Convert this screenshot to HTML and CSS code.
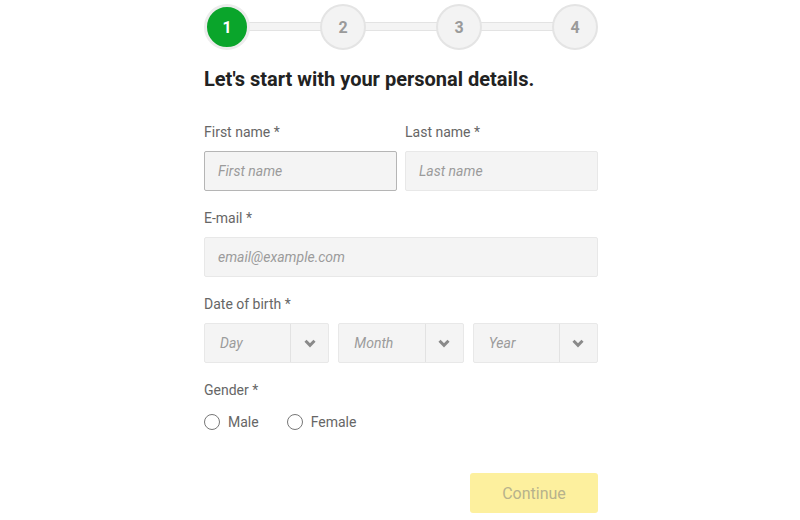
FILE: index.html
```html
<!DOCTYPE html>
<html lang="en">
<head>
  <meta charset="UTF-8">
  <title>Sign up - personal details</title>
  <link rel="stylesheet" href="styles.css">
</head>
<body>

<div class="wizard">
  <ol class="steps">
    <li class="step active">1</li>
    <li class="step">2</li>
    <li class="step">3</li>
    <li class="step">4</li>
  </ol>

  <h1>Let's start with your personal details.</h1>

  <form id="detailsForm">
    <div class="row">
      <div class="field">
        <label for="firstName">First name *</label>
        <input type="text" id="firstName" class="focused" placeholder="First name">
      </div>
      <div class="field">
        <label for="lastName">Last name *</label>
        <input type="text" id="lastName" placeholder="Last name">
      </div>
    </div>

    <div class="field">
      <label for="email">E-mail *</label>
      <input type="text" id="email" placeholder="email@example.com">
    </div>

    <div class="field">
      <label>Date of birth *</label>
      <div class="row dob">
        <div class="select"><span>Day</span><i class="chev"><svg width="12" height="9" viewBox="0 0 12 9"><path d="M1.5 1.8 6 6.3 10.5 1.8" fill="none" stroke="#8a8a8a" stroke-width="3"/></svg></i></div>
        <div class="select"><span>Month</span><i class="chev"><svg width="12" height="9" viewBox="0 0 12 9"><path d="M1.5 1.8 6 6.3 10.5 1.8" fill="none" stroke="#8a8a8a" stroke-width="3"/></svg></i></div>
        <div class="select"><span>Year</span><i class="chev"><svg width="12" height="9" viewBox="0 0 12 9"><path d="M1.5 1.8 6 6.3 10.5 1.8" fill="none" stroke="#8a8a8a" stroke-width="3"/></svg></i></div>
      </div>
    </div>

    <div class="field">
      <label>Gender *</label>
      <div class="radios">
        <span class="radio"><i></i>Male</span>
        <span class="radio"><i></i>Female</span>
      </div>
    </div>

    <div class="actions">
      <button type="submit" disabled>Continue</button>
    </div>
  </form>
</div>

</body>
</html>
```

FILE: styles.css
```css
body {
  margin: 0;
  font-family: Roboto, "Liberation Sans", sans-serif;
  background: #fff;
  color: #222;
}
.wizard {
  width: 396px;
  box-sizing: border-box;
  margin: 0 auto;
  padding: 4px 0 0 2px;
}
.steps {
  list-style: none;
  margin: 0;
  padding: 0;
  display: flex;
  justify-content: space-between;
  align-items: center;
  position: relative;
}
.steps::before {
  content: "";
  position: absolute;
  left: 20px;
  right: 20px;
  top: 18px;
  height: 7px;
  background: #f4f4f4;
  border: 1px solid #e3e3e3;
}
.step {
  position: relative;
  width: 42px;
  height: 42px;
  border-radius: 50%;
  border: 2px solid #e4e4e4;
  background: #f3f3f3;
  color: #9a9a9a;
  font-size: 16px;
  font-weight: bold;
  display: flex;
  align-items: center;
  justify-content: center;
}
.step.active {
  background: #0aa52b;
  color: #fff;
  border: 3px solid #ececec;
  width: 40px;
  height: 40px;
}
h1 {
  font-size: 20px;
  font-weight: bold;
  color: #222;
  margin: 17px 0 0;
  line-height: 24px;
}
form {
  margin-top: 31px;
}
.row {
  display: flex;
  gap: 8px;
}
.row > .field {
  flex: 1;
}
.field {
  margin-bottom: 17px;
}
label {
  display: block;
  font-size: 14px;
  line-height: 20px;
  color: #666;
  margin-bottom: 9px;
}
input[type="text"] {
  width: 100%;
  height: 40px;
  box-sizing: border-box;
  background: #f4f4f4;
  border: 1px solid #e8e8e8;
  border-radius: 2px;
  padding: 0 13px;
  font-family: inherit;
  font-size: 14px;
  outline: none;
}
input.focused {
  border-color: #b5b5b5;
}
input::placeholder {
  color: #9b9b9b;
  font-style: italic;
}
.dob {
  gap: 9px;
}
.select {
  flex: 1;
  height: 40px;
  box-sizing: border-box;
  display: flex;
  background: #f4f4f4;
  border: 1px solid #e8e8e8;
  border-radius: 2px;
}
.select span {
  flex: 1;
  padding-left: 15px;
  line-height: 38px;
  font-size: 14px;
  font-style: italic;
  color: #9b9b9b;
}
.chev {
  width: 37px;
  border-left: 1px solid #e2e2e2;
  display: flex;
  align-items: center;
  justify-content: center;
}
.radios {
  display: flex;
  gap: 28px;
  margin-top: 12px;
}
.radio {
  display: flex;
  align-items: center;
  font-size: 14px;
  line-height: 20px;
  color: #666;
}
.radio i {
  width: 14px;
  height: 14px;
  border: 1px solid #777;
  border-radius: 50%;
  margin-right: 8px;
}
.actions {
  display: flex;
  justify-content: flex-end;
  margin-top: 41px;
}
button {
  width: 128px;
  height: 40px;
  border: none;
  border-radius: 3px;
  background: #fdf09e;
  color: #b7b28c;
  font-family: inherit;
  font-size: 16px;
}
```
